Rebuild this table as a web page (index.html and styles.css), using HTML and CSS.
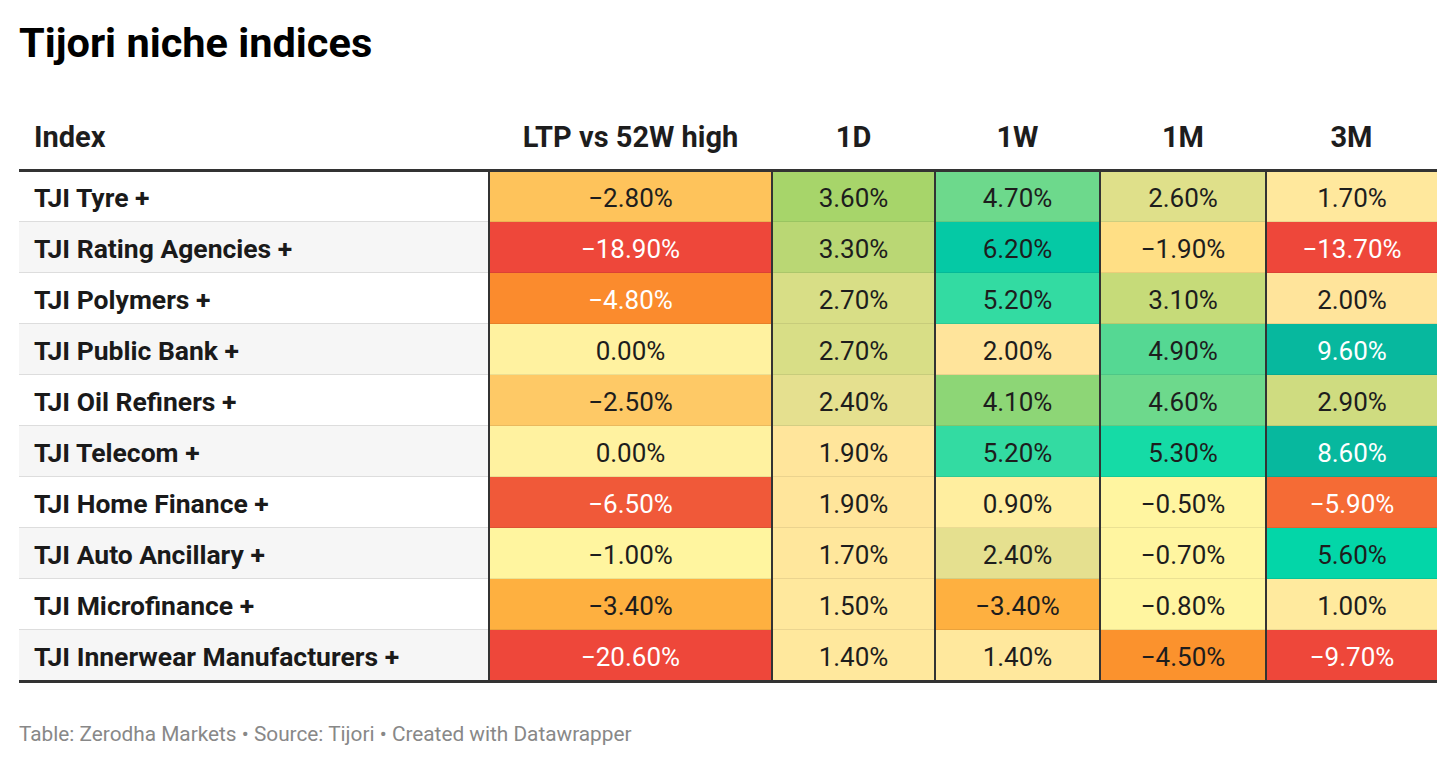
FILE: index.html
```html
<!DOCTYPE html>
<html>
<head>
<meta charset="utf-8">
<link rel="stylesheet" href="styles.css">
</head>
<body>
<div class="wrap">
  <h1 class="title">Tijori niche indices</h1>
  <table class="heat">
    <colgroup>
      <col class="c-idx"><col class="c-ltp"><col class="c-1d"><col class="c-1w"><col class="c-1m"><col class="c-3m">
    </colgroup>
    <thead>
      <tr>
        <th class="h-left">Index</th>
        <th>LTP vs 52W high</th>
        <th>1D</th>
        <th>1W</th>
        <th>1M</th>
        <th>3M</th>
      </tr>
    </thead>
    <tbody>
      <tr>
        <td class="lbl">TJI Tyre +</td>
        <td class="v" style="background:#fec35b">−2.80%</td>
        <td class="v" style="background:#a7d56a">3.60%</td>
        <td class="v" style="background:#6dd98c">4.70%</td>
        <td class="v" style="background:#dfe08a">2.60%</td>
        <td class="v" style="background:#ffe89d">1.70%</td>
      </tr>
      <tr>
        <td class="lbl">TJI Rating Agencies +</td>
        <td class="v inv" style="background:#ee473a">−18.90%</td>
        <td class="v" style="background:#bad774">3.30%</td>
        <td class="v" style="background:#05c9a5">6.20%</td>
        <td class="v" style="background:#ffdf85">−1.90%</td>
        <td class="v inv" style="background:#ee473a">−13.70%</td>
      </tr>
      <tr>
        <td class="lbl">TJI Polymers +</td>
        <td class="v inv" style="background:#fb8b2d">−4.80%</td>
        <td class="v" style="background:#d8de86">2.70%</td>
        <td class="v" style="background:#33dba2">5.20%</td>
        <td class="v" style="background:#c6db79">3.10%</td>
        <td class="v" style="background:#ffe49b">2.00%</td>
      </tr>
      <tr>
        <td class="lbl">TJI Public Bank +</td>
        <td class="v" style="background:#fff2a0">0.00%</td>
        <td class="v" style="background:#d8de86">2.70%</td>
        <td class="v" style="background:#ffe49b">2.00%</td>
        <td class="v" style="background:#55d893">4.90%</td>
        <td class="v inv" style="background:#07b89e">9.60%</td>
      </tr>
      <tr>
        <td class="lbl">TJI Oil Refiners +</td>
        <td class="v" style="background:#fec966">−2.50%</td>
        <td class="v" style="background:#e5e08f">2.40%</td>
        <td class="v" style="background:#8dd676">4.10%</td>
        <td class="v" style="background:#6dd98c">4.60%</td>
        <td class="v" style="background:#cfdc80">2.90%</td>
      </tr>
      <tr>
        <td class="lbl">TJI Telecom +</td>
        <td class="v" style="background:#fff2a0">0.00%</td>
        <td class="v" style="background:#ffe59b">1.90%</td>
        <td class="v" style="background:#33dba2">5.20%</td>
        <td class="v" style="background:#15dba6">5.30%</td>
        <td class="v inv" style="background:#07b89e">8.60%</td>
      </tr>
      <tr>
        <td class="lbl">TJI Home Finance +</td>
        <td class="v inv" style="background:#f05939">−6.50%</td>
        <td class="v" style="background:#ffe59b">1.90%</td>
        <td class="v" style="background:#ffee9f">0.90%</td>
        <td class="v" style="background:#fff5a0">−0.50%</td>
        <td class="v inv" style="background:#f56b35">−5.90%</td>
      </tr>
      <tr>
        <td class="lbl">TJI Auto Ancillary +</td>
        <td class="v" style="background:#fff59f">−1.00%</td>
        <td class="v" style="background:#ffe79c">1.70%</td>
        <td class="v" style="background:#e5e08f">2.40%</td>
        <td class="v" style="background:#fff5a0">−0.70%</td>
        <td class="v" style="background:#03d6a8">5.60%</td>
      </tr>
      <tr>
        <td class="lbl">TJI Microfinance +</td>
        <td class="v" style="background:#feb040">−3.40%</td>
        <td class="v" style="background:#ffe89d">1.50%</td>
        <td class="v" style="background:#feb040">−3.40%</td>
        <td class="v" style="background:#fff5a0">−0.80%</td>
        <td class="v" style="background:#ffea9e">1.00%</td>
      </tr>
      <tr>
        <td class="lbl">TJI Innerwear Manufacturers +</td>
        <td class="v inv" style="background:#ee473a">−20.60%</td>
        <td class="v" style="background:#ffe89d">1.40%</td>
        <td class="v" style="background:#ffe89d">1.40%</td>
        <td class="v" style="background:#fb922d">−4.50%</td>
        <td class="v inv" style="background:#ee473a">−9.70%</td>
      </tr>
    </tbody>
  </table>
  <p class="foot">Table: Zerodha Markets • Source: Tijori • Created with Datawrapper</p>
</div>
</body>
</html>
```
FILE: styles.css
```css
html, body {
  margin: 0;
  padding: 0;
  background: #ffffff;
}
.wrap {
  padding: 19px 20px 0 19px;
  font-family: Roboto, "Liberation Sans", sans-serif;
  color: #1d1d1d;
}
.title {
  margin: 0;
  font-size: 41.5px;
  line-height: 48px;
  font-weight: 700;
  color: #000;
}
.heat {
  margin-top: 30px;
  width: 1418px;
  border-collapse: collapse;
  table-layout: fixed;
}
.c-idx { width: 470px; }
.c-ltp { width: 283px; }
.c-1d { width: 163px; }
.c-1w { width: 165px; }
.c-1m { width: 166px; }
.c-3m { width: 171px; }
.heat th {
  font-size: 29px;
  line-height: 34px;
  font-weight: 700;
  padding: 23px 10px 15px;
  text-align: center;
  border-bottom: 3px solid #333;
  color: #1d1d1d;
  white-space: nowrap;
}
.heat th.h-left {
  text-align: left;
  padding-left: 15px;
}
.heat td {
  height: 51px;
  padding: 3px 10px 0;
  box-sizing: border-box;
  font-size: 26px;
  line-height: 30px;
  border-bottom: 1px solid #dddddd;
  white-space: nowrap;
}
.heat tbody tr:nth-child(even) td.lbl {
  background: #f6f6f6;
}
.heat tbody tr:last-child td {
  height: 52px;
  border-bottom: 3px solid #333;
}
.heat td.lbl {
  font-weight: 700;
  font-size: 26.5px;
  padding-left: 15px;
  color: #1a1a1a;
}
.heat td.v {
  text-align: center;
  border-left: 2px solid #333;
  border-bottom-color: rgba(0, 0, 0, 0.08);
  color: #1d1d1d;
}
.heat tbody tr:last-child td.v {
  border-bottom-color: #333;
}
.heat td.inv {
  color: #ffffff;
}
.foot {
  margin: 39px 0 0;
  font-size: 20.8px;
  line-height: 24px;
  color: #888888;
}
```
